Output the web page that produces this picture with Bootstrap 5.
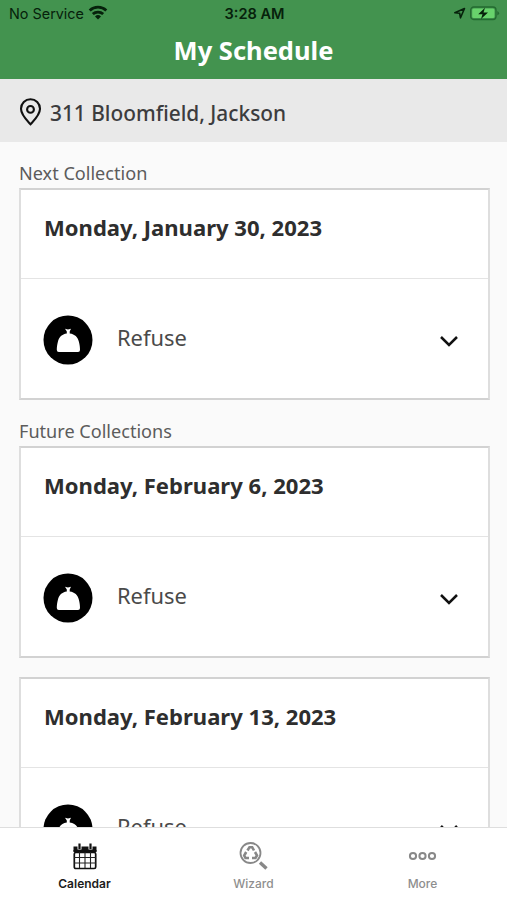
<!DOCTYPE html>
<html lang="en">
<head>
<meta charset="utf-8">
<meta name="viewport" content="width=device-width, initial-scale=1">
<title>My Schedule</title>
<link href="https://cdn.jsdelivr.net/npm/bootstrap@5.3.0/dist/css/bootstrap.min.css" rel="stylesheet">
<style>
body{font-family:"Noto Sans","Open Sans",sans-serif;background:#fafafa;color:#333}
.ui-font{font-family:Inter,"Liberation Sans",sans-serif}
.app{height:900px}
.app-head{background:#43934f;height:79px}
.status{height:28px;font-size:14.400px;color:#06210b;padding:0 7px 0 9px}
.status svg{display:block;margin-top:-2px}
.clock{font-size:14.600px;padding-top:1px}
.page-title{font-size:25.500px;line-height:44px;font-weight:700}
.address{background:#e9e9e9;height:63px;font-size:20.850px;font-weight:500;color:#3c3c3e;padding:7px 19px 0}
.address svg{margin-top:-5px}
.section-label{font-size:18.100px;line-height:24px;color:#5c5c5c}
.schedule{padding:19px 17px 0 19px}
.pickup{height:212px;margin:3px 0 19px;border:2px solid #d2d2d2;border-left-color:#dedede;border-right-color:#dedede}
.pickup-date{height:89px;border-bottom:1px solid #e4e4e4;padding:21px 23px 0;font-size:22.050px;line-height:32px;font-weight:700;color:#2e2e2e}
.pickup-row{height:119px;padding:2px 29px 0 22px}
.pickup-row svg:last-child{margin-top:2px}
.pickup-name{font-size:21.900px;color:#4a4a4a;line-height:30px;margin:-4px 0 0 24px}
.tabs{height:73px;border-top:1px solid #dedede;font-size:12px;font-weight:500;color:#8e8e8e}
.tabs .tab{padding-top:14px}
.tabs .tab-on{color:#1c1c1c;font-weight:600}
.tab span{line-height:16px;margin-top:4px}
</style>
</head>
<body>
<svg width="0" height="0" class="position-absolute">
  <symbol id="bag" viewBox="0 0 50 50"><circle cx="25" cy="25" r="24.500" fill="#000"/><path d="M22 13.800l3 .6 3-.6-1.300 2.600v2.200c5.200.6 8 3.600 9.200 8.200.8 3 1.100 5.600 1.100 8.200q0 2-2 2H15.800q-2 0-2-2c0-2.600.3-5.200 1.100-8.200 1.200-4.600 4-7.600 8.900-8.200v-2.200z" fill="#fff"/></symbol>
  <symbol id="chevron" viewBox="0 0 20 14"><path d="M2 3l8 8 8-8" fill="none" stroke="#111" stroke-width="2.500"/></symbol>
</svg>
<div class="app d-flex flex-column overflow-hidden">
  <header class="app-head flex-shrink-0">
    <div class="status ui-font d-flex align-items-center">
      <div class="col d-flex align-items-center"><span>No Service</span>
        <svg class="ms-1" width="20" height="15" viewBox="0 0 20 15" fill="none" stroke="#06210b" stroke-width="2.800"><path d="M1.700 5.500a12 12 0 0 1 16.600 0M4.800 9.100a7.600 7.600 0 0 1 10.400 0"/><path d="M10 14.500l-3-3a4.400 4.400 0 0 1 6 0z" fill="#06210b" stroke="none"/></svg>
      </div>
      <div class="clock fw-semibold">3:28 AM</div>
      <div class="col d-flex align-items-center justify-content-end gap-1">
        <svg width="13" height="14" viewBox="0 0 13 14"><path d="M1.800 6.800L11.500 2.500 7.500 11.800 6.700 7.300z" fill="none" stroke="#06210b" stroke-width="1.600" stroke-linejoin="round"/></svg>
        <svg width="30" height="15" viewBox="1 0 30 15"><rect x="1.700" y="1" width="25.300" height="12.500" rx="3" fill="none" stroke="#236b30" stroke-width="1.300"/><rect x="3.200" y="2.500" width="22.300" height="9.500" rx="1.500" fill="#68d36c"/><path d="M28.300 5v4.600q1.800-.8 1.800-2.300T28.300 5z" fill="#236b30"/><path d="M16 1.800L9.200 8.200h4.300L12 13l7-6.500h-4.500z" fill="#06210b"/></svg>
      </div>
    </div>
    <h1 class="page-title text-center text-white m-0">My Schedule</h1>
  </header>
  <div class="address d-flex align-items-center flex-shrink-0">
    <svg class="me-2" width="23" height="28" viewBox="0 0 23 28" fill="none" stroke="#111" stroke-width="2.100"><path d="M11.500 26.300C8.500 23 2 17 2 10.800a9.500 9.500 0 0 1 19 0C21 17 14.500 23 11.500 26.300z"/><circle cx="11.500" cy="11.400" r="3.400"/></svg>
    <span>311 Bloomfield, Jackson</span>
  </div>
  <main class="schedule flex-grow-1 overflow-hidden">
    <div class="section-label">Next Collection</div>
    <section class="card pickup rounded-0">
      <div class="pickup-date">Monday, January 30, 2023</div>
      <div class="pickup-row d-flex align-items-center"><svg width="50" height="50"><use href="#bag"/></svg><span class="pickup-name">Refuse</span><svg class="ms-auto" width="20" height="14"><use href="#chevron"/></svg></div>
    </section>
    <div class="section-label">Future Collections</div>
    <section class="card pickup rounded-0">
      <div class="pickup-date">Monday, February 6, 2023</div>
      <div class="pickup-row d-flex align-items-center"><svg width="50" height="50"><use href="#bag"/></svg><span class="pickup-name">Refuse</span><svg class="ms-auto" width="20" height="14"><use href="#chevron"/></svg></div>
    </section>
    <section class="card pickup rounded-0">
      <div class="pickup-date">Monday, February 13, 2023</div>
      <div class="pickup-row d-flex align-items-center"><svg width="50" height="50"><use href="#bag"/></svg><span class="pickup-name">Refuse</span><svg class="ms-auto" width="20" height="14"><use href="#chevron"/></svg></div>
    </section>
  </main>
  <nav class="tabs ui-font row g-0 bg-white flex-shrink-0 text-center">
    <div class="tab tab-on col d-flex flex-column align-items-center">
      <svg width="26" height="30" viewBox="0 0 26 30"><path d="M1.500 4.500h23v5h-23z" fill="#111"/><path d="M7.500 1v6.500M18.500 1v6.500" stroke="#fff" stroke-width="4"/><path d="M7.500 1.500v5.500M18.500 1.500v5.500" stroke="#111" stroke-width="2.200"/><path d="M1.500 8h23v2h-23z" fill="#111"/><rect x="2.300" y="10.500" width="21.400" height="16" rx="1.500" fill="none" stroke="#111" stroke-width="1.700"/><path d="M7.500 10v16M13 10v16M18.500 10v16M2 15.500h22M2 21h22" stroke="#222" stroke-width="1.100"/></svg>
      <span>Calendar</span>
    </div>
    <div class="tab col d-flex flex-column align-items-center">
      <svg width="30" height="30" viewBox="0.500 0.500 30 30" fill="none" stroke="#888"><circle cx="12" cy="11.500" r="10" stroke-width="1.800"/><path d="M21.500 21l6.500 6" stroke-width="3.400"/><path d="M9 9l2-3.300h2.700L15.500 9M16.500 10.500l2 3.500-1.500 2.500h-3.500M10.500 16.500H7l-1.300-2.500 2-3.500" stroke-width="2.600"/></svg>
      <span>Wizard</span>
    </div>
    <div class="tab col d-flex flex-column align-items-center">
      <svg width="30" height="30" viewBox="0.500 0.500 30 30" fill="none" stroke="#888" stroke-width="2"><circle cx="5.500" cy="14.500" r="3.100"/><circle cx="15" cy="14.500" r="3.100"/><circle cx="24.500" cy="14.500" r="3.100"/></svg>
      <span>More</span>
    </div>
  </nav>
</div>
<script src="https://cdn.jsdelivr.net/npm/bootstrap@5.3.0/dist/js/bootstrap.bundle.min.js"></script>
</body>
</html>
